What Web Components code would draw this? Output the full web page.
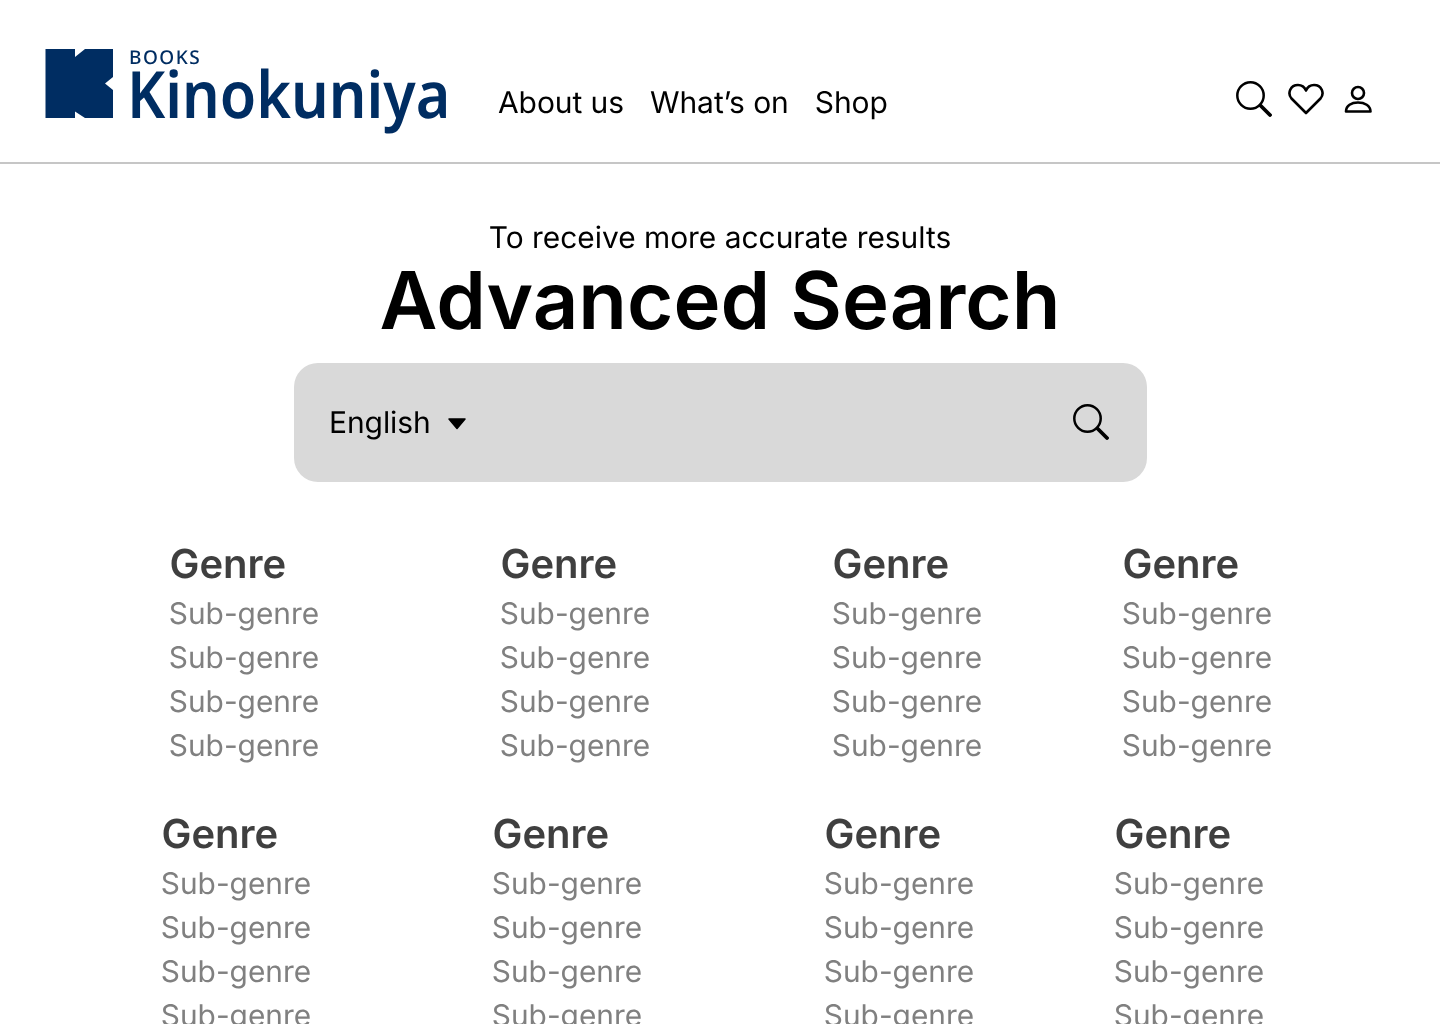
<!DOCTYPE html>
<html lang="en"><head><meta charset="utf-8"><title>Advanced Search</title>
<style>
html,body{margin:0;padding:0;background:#fff;height:1024px;overflow:hidden;font-family:Inter,"Liberation Sans",sans-serif;color:#000;text-rendering:geometricPrecision}
</style></head><body>
<site-header></site-header>
<search-hero></search-hero>
<genre-row style="--left:169.500px;--top:58px"></genre-row>
<genre-row style="--left:161.500px;--top:42px"></genre-row>
<script>
const searchSvg=()=>`<svg width="36" height="36" viewBox="0 0 36 36" fill="none" stroke="#000" stroke-linecap="round"><circle cx="14.500" cy="14.500" r="13.200" stroke-width="2.500"/><path d="M24.500 24.500 34 34" stroke-width="3.800"/></svg>`;
class SiteLogo extends HTMLElement{constructor(){super();this.attachShadow({mode:'open'}).innerHTML=`<style>
:host{display:flex;gap:16px;align-items:flex-start;color:#002d62;font-family:"Noto Sans",sans-serif}
svg{display:block;flex:none;margin-top:2px}
.t{display:flex;flex-direction:column;width:320px}
.b{font-size:19px;line-height:18px;height:18px;font-weight:500;letter-spacing:1.500px;margin-top:1px}
.k{font-size:65px;line-height:60px;font-weight:600;white-space:nowrap;margin:-2.500px 0 0 -2px;transform:scaleX(.91);transform-origin:0 0}
</style><svg width="68" height="69" viewBox="0 0 68 69" fill="#002d62"><path d="M.5 0H30V8L40 0H68V28L60 34.500 68 41V69H40L30 62.500V69H.5Z"/></svg><div class="t"><span class="b">BOOKS</span><span class="k">Kinokuniya</span></div>`}}
customElements.define('site-logo',SiteLogo);
class SiteHeader extends HTMLElement{constructor(){super();this.attachShadow({mode:'open'}).innerHTML=`<style>
:host{display:flex;box-sizing:border-box;height:164px;border-bottom:2px solid #c6c6c6;padding:47px 67px 0 45px;align-items:flex-start;will-change:transform}
nav{display:flex;gap:26px;margin:23px 0 0 49px;font-size:30px;letter-spacing:-.08px;line-height:67px;height:67px;align-items:center}
.i{margin-left:auto;display:flex;align-items:center;padding-top:34px}
.h{margin:0 19px 0 16px}
svg{display:block}
</style><site-logo></site-logo><nav><span>About us</span><span>What’s on</span><span>Shop</span></nav>
<div class="i">${searchSvg()}
<svg class="h" width="36" height="32" viewBox="0 0 36 32" fill="none" stroke="#000" stroke-width="2.600" stroke-linejoin="round"><path d="M18 30 3.500 15.500C-1 10 2.500 2 10 2c4 0 6.500 2 8 5.500C19.500 4 22 2 26 2c7.500 0 11 8 6.500 13.500Z"/></svg>
<svg width="30" height="30" viewBox="0 0 30 30" fill="none" stroke="#000" stroke-width="2.600"><circle cx="15" cy="9" r="6"/><path d="M3 27.500C3 21.500 8.500 18.500 15 18.500S27.500 21.500 27.500 27.500Z" stroke-linejoin="round"/></svg></div>`}}
customElements.define('site-header',SiteHeader);
class SearchHero extends HTMLElement{constructor(){super();this.attachShadow({mode:'open'}).innerHTML=`<style>
:host{display:flex;flex-direction:column;align-items:center;will-change:transform}
p{margin:57px 0 .5px;font-size:29.900px;line-height:34px}
h1{margin:0;font-size:79.600px;line-height:90px;font-weight:600}
.bar{box-sizing:border-box;width:853px;height:119px;margin-top:17.500px;background:#d9d9d9;border-radius:24px;display:flex;align-items:center;padding:0 38px 0 35.500px;font-size:30px;letter-spacing:-.08px}
.c{display:block;margin-left:16px;margin-top:3px}
.s{margin-left:auto;display:flex;margin-top:-2px}
</style><p>To receive more accurate results</p><h1>Advanced Search</h1>
<div class="bar"><span>English</span><svg class="c" width="20" height="12" viewBox="0 0 20 12"><path d="M2 1H18L10 10.500Z" fill="#000" stroke="#000" stroke-width="1.500" stroke-linejoin="round"/></svg><span class="s">${searchSvg()}</span></div>`}}
customElements.define('search-hero',SearchHero);
class GenreList extends HTMLElement{constructor(){super();this.attachShadow({mode:'open'}).innerHTML=`<style>
:host{display:flex;flex-direction:column}
h2{margin:0 0 4px;font-size:40px;line-height:48px;font-weight:600;color:#3f3f3f}
span{font-size:29.850px;line-height:44px;color:#808080;margin-left:-.700px}
</style><h2>Genre</h2>${'<span>Sub-genre</span>'.repeat(4)}`}}
customElements.define('genre-list',GenreList);
class GenreRow extends HTMLElement{constructor(){super();this.attachShadow({mode:'open'}).innerHTML=`<style>
:host{display:grid;grid-template-columns:331px 332px 290px auto;padding-left:var(--left);margin-top:var(--top);will-change:transform}
</style>${'<genre-list></genre-list>'.repeat(4)}`}}
customElements.define('genre-row',GenreRow);
</script></body></html>
